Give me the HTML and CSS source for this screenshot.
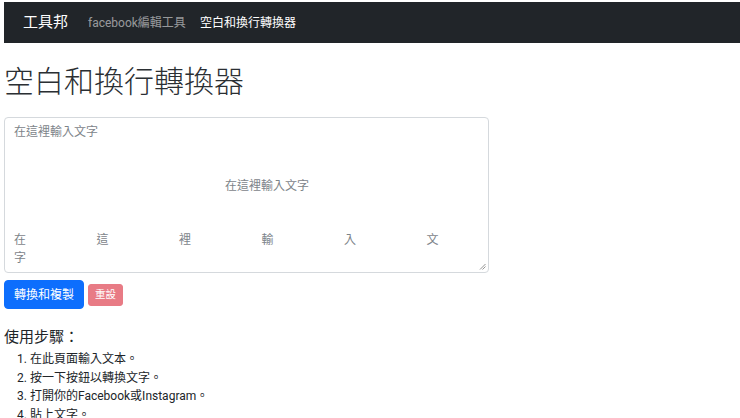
FILE: index.html
```html
<!DOCTYPE html>
<html lang="zh-Hant">
<head>
<meta charset="utf-8">
<title>空白和換行轉換器</title>
<link rel="stylesheet" href="styles.css">
</head>
<body>
<div class="page">
  <nav class="navbar">
    <a class="brand" href="#">工具邦</a>
    <a class="nav-link" href="#">facebook編輯工具</a>
    <a class="nav-link active" href="#">空白和換行轉換器</a>
  </nav>
  <main class="content">
    <h1 class="title">空白和換行轉換器</h1>
    <div class="textarea">
      <div class="ph-line">在這裡輸入文字</div>
      <div class="ph-line"></div>
      <div class="ph-line"></div>
      <div class="ph-line ph-center">在這裡輸入文字</div>
      <div class="ph-line"></div>
      <div class="ph-line"></div>
      <div class="ph-line ph-spread"><span>在</span><span>這</span><span>裡</span><span>輸</span><span>入</span><span>文</span></div>
      <div class="ph-line">字</div>
      <svg class="resize" width="7" height="7" viewBox="0 0 7 7"><path d="M1 6.5 L6.5 1 M3.5 6.5 L6.5 3.5" stroke="#888" stroke-width="0.9"/></svg>
    </div>
    <div class="actions">
      <button class="btn btn-primary">轉換和複製</button>
      <button class="btn btn-danger" disabled>重設</button>
    </div>
    <h5 class="steps-title">使用步驟：</h5>
    <ol class="steps">
      <li>在此頁面輸入文本。</li>
      <li>按一下按鈕以轉換文字。</li>
      <li>打開你的Facebook或Instagram。</li>
      <li>貼上文字。</li>
    </ol>
  </main>
</div>
</body>
</html>
```
FILE: styles.css
```css
html, body {
  margin: 0;
  padding: 0;
  background: #fff;
}
body {
  font-family: Roboto, "Noto Sans CJK TC", sans-serif;
  font-size: 12px;
  line-height: 1.5;
  color: #212529;
}
.page {
  padding: 2px 0 0 4px;
}
.navbar {
  background: #212529;
  height: 41px;
  display: flex;
  align-items: center;
  padding: 0 0 0 19px;
}
.navbar a {
  text-decoration: none;
}
.brand {
  color: #fff;
  font-size: 15px;
  margin-right: 13px;
}
.nav-link {
  color: rgba(255, 255, 255, 0.55);
  font-size: 12px;
  padding: 0 7px;
}
.nav-link.active {
  color: #fff;
}
.content {
  display: flex;
  flex-direction: column;
  align-items: flex-start;
}
.title {
  font-size: 30px;
  font-weight: 300;
  line-height: 1.2;
  margin: 21px 0 0 0;
  height: 53px;
  color: #2b2f33;
}
.textarea {
  position: relative;
  box-sizing: border-box;
  width: 485px;
  height: 156px;
  border: 1px solid #d5d9dd;
  border-radius: 4px;
  padding: 4.5px 9px;
  color: #7d848a;
  line-height: 18px;
}
.ph-line {
  height: 18px;
  white-space: nowrap;
}
.ph-center {
  padding-left: 211px;
}
.ph-spread {
  display: flex;
}
.ph-spread span {
  width: 82.5px;
  flex: none;
}
.resize {
  position: absolute;
  right: 2px;
  bottom: 2px;
}
.actions {
  display: flex;
  align-items: center;
  gap: 4px;
  margin-top: 7px;
}
.btn {
  font-family: inherit;
  border: 1px solid transparent;
  border-radius: 4px;
  color: #fff;
}
.btn-primary {
  background: #0d6efd;
  border-color: #0d6efd;
  font-size: 12px;
  line-height: 18px;
  padding: 4.5px 9px;
}
.btn-danger {
  background: #dc3545;
  border-color: #dc3545;
  opacity: 0.65;
  font-size: 10.5px;
  line-height: 15px;
  padding: 2.5px 6px;
  border-radius: 3px;
}
.steps-title {
  font-size: 15px;
  font-weight: 400;
  line-height: 18px;
  margin: 19px 0 4px 0;
}
.steps {
  margin: 0;
  padding-left: 26px;
}
.steps li {
  line-height: 18.5px;
}
```
